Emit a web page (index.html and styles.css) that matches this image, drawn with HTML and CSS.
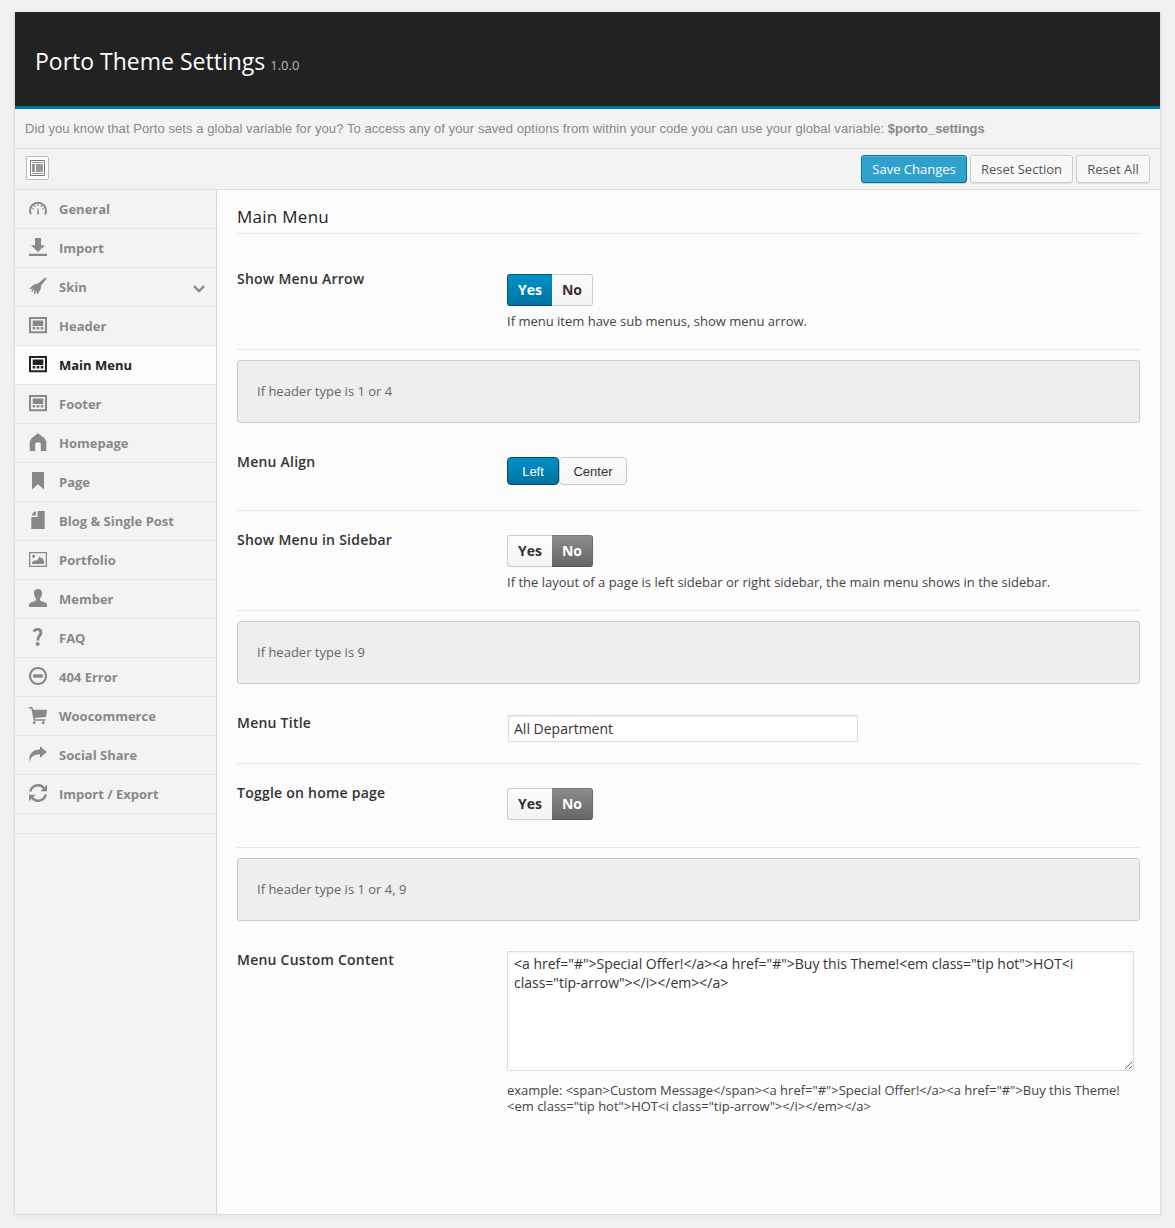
FILE: index.html
```html
<!DOCTYPE html>
<html lang="en">
<head>
<meta charset="utf-8">
<title>Porto Theme Settings</title>
<link rel="stylesheet" href="styles.css">
</head>
<body>
<svg class="sprite" aria-hidden="true">
  <symbol id="website" viewBox="0 0 18 18"><path fill-rule="evenodd" d="M0 1h18v16.300H0zM2 3v12.300h14V3zM3.700 4.500h10.600v5.500H3.700zM3.700 11h2.600v2.400H3.700zM7.700 11h2.600v2.400H7.700zM11.700 11h2.600v2.400h-2.600z"/></symbol>
</svg>
<div class="panel">
  <header class="header">
    <h1 class="brand">Porto Theme Settings</h1>
    <span class="version">1.0.0</span>
  </header>
  <div class="intro">Did you know that Porto sets a global variable for you? To access any of your saved options from within your code you can use your global variable: <strong>$porto_settings</strong></div>
  <div class="toolbar">
    <button class="expand" aria-label="Expand options">
      <svg width="15" height="16" viewBox="0 0 15 16"><path fill="#fff" stroke="#777" d="M.5.500h14v15H.5z"/><path fill="#999" d="M2 2h11v1H2zM2 4h3v8H2zM6 4h7v8H6zM2 13h11v1H2z"/></svg>
    </button>
    <div class="actions">
      <button class="btn btn-primary">Save Changes</button>
      <button class="btn btn-section">Reset Section</button>
      <button class="btn btn-all">Reset All</button>
    </div>
  </div>
  <div class="body">
    <nav class="sidebar">
      <a class="item"><svg class="icon" viewBox="0 0 18 18"><path fill="none" stroke="currentColor" stroke-width="2" d="M2 15.200A8 8 0 0 1 1 11.500a8 7.700 0 0 1 16 0 8 8 0 0 1-1 3.700"/><path d="M8.500 9.500h1l.5 5.700H8zM8.300 5.500h1.400V7H8.300zM5 6.300h1.400v1.400H5zM11.600 6.300H13v1.400h-1.400zM3.500 9h1.300v1.400H3.500zM13.200 9h1.300v1.400h-1.300z"/></svg>General</a>
      <a class="item"><svg class="icon" viewBox="0 0 18 18"><path d="M6 0h6v7.200h4L9 14 2 7.200h4zM0 15.800h18V18H0z"/></svg>Import</a>
      <a class="item"><svg class="icon" viewBox="0 0 18 18"><path d="M16.300.400 17.700 1.600 12 8.800C12.500 11.500 10.500 15 8 17.500L7.300 13.500 6 17.300 4.700 16 6 12.500 3 15 2.200 13.500 4.500 11.500 0 12.300C2.500 9 5.500 6.500 9.200 6.500z"/></svg>Skin<svg class="chevron" viewBox="0 0 12 8"><path fill="none" stroke="currentColor" stroke-width="2.400" d="M1 1.200 6 6l5-4.800"/></svg></a>
      <a class="item"><svg class="icon"><use href="#website"/></svg>Header</a>
      <a class="item active"><svg class="icon"><use href="#website"/></svg>Main Menu</a>
      <a class="item"><svg class="icon"><use href="#website"/></svg>Footer</a>
      <a class="item"><svg class="icon" viewBox="0 0 18 18"><path d="M9 .3l6.500 5 1.800 3.200V18h-5.500v-7Q11.800 9.300 9 9.300T6.200 11v7H.7V8.500l1.800-3.200z"/></svg>Homepage</a>
      <a class="item"><svg class="icon" viewBox="0 0 18 18"><path d="M3 0h12v17.500l-6-5.200-6 5.200z"/></svg>Page</a>
      <a class="item"><svg class="icon" viewBox="0 0 18 18"><path d="M8.500 0h7.200v18H2.300V6h6.200zM6.900.300v4.200H2.700C3.300 2.300 4.700.9 6.900.3z"/></svg>Blog &amp; Single Post</a>
      <a class="item"><svg class="icon" viewBox="0 0 18 18"><path fill-rule="evenodd" d="M0 2h18v15H0zM1.300 3.300v12.400h15.400V3.300zM3 14v-1.500L6 10l1.700 1 3-4.700 1.500 2 1-.5L15 11v3z"/><circle cx="4.500" cy="6.300" r="1.500"/></svg>Portfolio</a>
      <a class="item"><svg class="icon" viewBox="0 0 18 18"><path d="M9 0c2.800 0 4.200 1.700 4 4.500-.1 2.300-1 4-2 5-.5 1.300.3 2.300 1.600 2.700l3.700 1.300Q18 14.200 18 16v2H0v-2q0-1.800 1.700-2.500l3.700-1.300C6.700 11.800 7.500 10.800 7 9.500c-1-1-1.900-2.700-2-5C4.800 1.700 6.200 0 9 0z"/></svg>Member</a>
      <a class="item"><svg class="icon" viewBox="0 0 18 18"><path fill="none" stroke="currentColor" stroke-width="2.900" d="M4.800 3.700Q5.800 1.400 8.500 1.400c2.300 0 3.400 1.300 3.400 3 0 3.300-3.200 3.500-3.200 8"/><circle cx="8.700" cy="16" r="2"/></svg>FAQ</a>
      <a class="item"><svg class="icon" viewBox="0 0 18 18"><circle cx="9" cy="9" r="8" fill="none" stroke="currentColor" stroke-width="2.100"/><path d="M4.200 7.300h9.600v3.400H4.200z"/></svg>404 Error</a>
      <a class="item"><svg class="icon" viewBox="0 0 18 18"><path d="M0 1h3.200l1 2.700H18l-1 7.200-11.300 1.200.3 1.200h10.500v1.400H4.800L2.300 2.600H0z"/><circle cx="5.300" cy="16.700" r="1.400"/><circle cx="14.200" cy="16.700" r="1.400"/></svg>Woocommerce</a>
      <a class="item"><svg class="icon" viewBox="0 0 18 18"><path d="M11 1.300 17.800 7 11 12.800V9.600C5.500 9 2 11.500.4 16.700-.8 9.500 4 4.500 11 4.600z"/></svg>Social Share</a>
      <a class="item"><svg class="icon" viewBox="0 0 18 18"><path fill="none" stroke="currentColor" stroke-width="2.400" d="M1.300 7.500A7.800 7.800 0 0 1 15 4.200M16.700 10.500A7.800 7.800 0 0 1 3 13.800"/><path d="M18 .8v6.400h-6.600zM0 17.200v-6.400h6.600z"/></svg>Import / Export</a>
      <div class="divider"></div>
    </nav>
    <main class="content">
      <h2 class="title">Main Menu</h2>
      <section class="row row-arrow">
        <h3 class="label">Show Menu Arrow</h3>
        <div class="field">
          <div class="switch"><span class="yes on">Yes</span><span class="no">No</span></div>
          <p class="desc">If menu item have sub menus, show menu arrow.</p>
        </div>
      </section>
      <div class="info">If header type is 1 or 4</div>
      <section class="row row-align">
        <h3 class="label">Menu Align</h3>
        <div class="field choices"><span class="choice chosen">Left</span><span class="choice center">Center</span></div>
      </section>
      <section class="row row-sidebar">
        <h3 class="label">Show Menu in Sidebar</h3>
        <div class="field">
          <div class="switch"><span class="yes">Yes</span><span class="no off">No</span></div>
          <p class="desc">If the layout of a page is left sidebar or right sidebar, the main menu shows in the sidebar.</p>
        </div>
      </section>
      <div class="info">If header type is 9</div>
      <section class="row row-title">
        <h3 class="label">Menu Title</h3>
        <div class="field"><input class="text" type="text" value="All Department"></div>
      </section>
      <section class="row row-toggle">
        <h3 class="label">Toggle on home page</h3>
        <div class="field">
          <div class="switch"><span class="yes">Yes</span><span class="no off">No</span></div>
        </div>
      </section>
      <div class="info">If header type is 1 or 4, 9</div>
      <section class="row row-custom">
        <h3 class="label">Menu Custom Content</h3>
        <div class="field">
          <textarea class="area" spellcheck="false">&lt;a href="#"&gt;Special Offer!&lt;/a&gt;&lt;a href="#"&gt;Buy this Theme!&lt;em class="tip hot"&gt;HOT&lt;i class="tip-arrow"&gt;&lt;/i&gt;&lt;/em&gt;&lt;/a&gt;</textarea>
          <p class="desc">example: &lt;span&gt;Custom Message&lt;/span&gt;&lt;a href="#"&gt;Special Offer!&lt;/a&gt;&lt;a href="#"&gt;Buy this Theme!<br>&lt;em class="tip hot"&gt;HOT&lt;i class="tip-arrow"&gt;&lt;/i&gt;&lt;/em&gt;&lt;/a&gt;</p>
        </div>
      </section>
    </main>
  </div>
</div>
</body>
</html>
```
FILE: styles.css
```css
* { box-sizing: border-box; }
body {
  margin: 0;
  padding: 12px 14px 13px;
  background: #f1f1f1;
  color: #444;
  font: 13px/18px "Open Sans", sans-serif;
}
h1, h2, h3, p { margin: 0; }
button { font-family: inherit; }
.sprite { display: none; }

.panel {
  display: flex;
  flex-direction: column;
  height: 1203px;
  border: 1px solid #dedede;
  border-top: 0;
  background: #f3f3f3;
  box-shadow: 0 1px 5px rgba(0, 0, 0, .06);
}

.header {
  display: flex;
  align-items: baseline;
  gap: 5px;
  height: 97px;
  padding: 32px 20px 0;
  border-bottom: 3px solid #0074a2;
  background: #222;
}
.brand { color: #fff; font-size: 23px; font-weight: 400; line-height: 34px; }
.version { color: #bbb; font-size: 13px; }

.intro {
  height: 40px;
  padding: 11px 10px 9px;
  border-bottom: 1px solid #dedede;
  color: #888;
  font-family: "Liberation Sans", sans-serif;
  letter-spacing: .075px;
}
.intro strong { letter-spacing: -.05px; }

.toolbar {
  display: flex;
  justify-content: space-between;
  height: 41px;
  padding: 6px 10px 0 11px;
  border-bottom: 1px solid #dedede;
}
.expand {
  display: flex;
  align-items: center;
  justify-content: center;
  width: 23px;
  height: 24px;
  margin-top: 1px;
  padding: 0;
  border: 1px solid #bbb;
  border-radius: 2px;
  background: #fff;
}
.actions { display: flex; gap: 3px; }
.btn {
  height: 28px;
  padding: 0;
  border: 1px solid #ccc;
  border-radius: 3px;
  background: #f7f7f7;
  box-shadow: inset 0 1px 0 #fff, 0 1px 0 rgba(0, 0, 0, .08);
  color: #555;
  font-size: 13px;
}
.btn-primary {
  width: 106px;
  border-color: #0074a2;
  background: #2ea2cc;
  box-shadow: inset 0 1px 0 rgba(120, 200, 230, .5), 0 1px 0 rgba(0, 0, 0, .15);
  color: #fff;
}
.btn-section { width: 103px; }
.btn-all { width: 74px; }

.body { display: flex; flex: 1; }
.sidebar { width: 202px; border-right: 1px solid #d8d8d8; }
.item {
  display: flex;
  align-items: center;
  height: 39px;
  padding: 0 11px 0 14px;
  border-bottom: 1px solid #e7e7e7;
  color: #888;
  font-weight: 700;
}
.active { background: #fcfcfc; color: #222; }
.icon { width: 18px; height: 18px; margin: -2px 12px 0 0; fill: currentColor; }
.chevron { width: 12px; height: 8px; margin: 3px 0 0 auto; }
.divider { height: 20px; border-bottom: 1px solid #e7e7e7; }

.content { flex: 1; padding: 0 20px; background: #fcfcfc; }
.title {
  height: 44px;
  padding-top: 18px;
  border-bottom: 1px solid #e7e7e7;
  color: #222;
  font-size: 17px;
  font-weight: 400;
  letter-spacing: .28px;
}
.row { display: flex; border-bottom: 1px solid #e7e7e7; }
.label {
  width: 270px;
  color: #333;
  font-size: 14px;
  font-weight: 600;
  letter-spacing: .24px;
  line-height: 18px;
}
.field { flex: 1; }
.row-arrow { height: 116px; padding-top: 36px; }
.row-arrow .field { padding-top: 4px; }
.row-align { height: 88px; padding-top: 30px; }
.row-align .field { padding-top: 4px; }
.row-sidebar { height: 100px; padding-top: 20px; }
.row-sidebar .field { padding-top: 4px; }
.row-title { height: 80px; padding-top: 30px; }
.row-title .field { padding: 1px 0 0 1px; }
.row-toggle { height: 84px; padding-top: 20px; }
.row-toggle .field { padding-top: 4px; }
.row-custom { padding-top: 30px; border: 0; }

.switch { display: flex; height: 32px; }
.switch span {
  height: 32px;
  border: 1px solid #ccc;
  background: linear-gradient(#fcfcfc, #f3f3f3);
  color: #333;
  font-size: 14px;
  font-weight: 700;
  line-height: 30px;
  text-align: center;
}
.switch .yes { width: 45px; border-right: 0; border-radius: 3px 0 0 3px; }
.switch .no { width: 41px; border-left: 0; border-radius: 0 3px 3px 0; }
.switch .on { border-color: #005f87 #005f87 #004b6b; background: linear-gradient(#0090c8, #0074a2); color: #fff; }
.switch .off { border-color: #777 #666 #555; background: linear-gradient(#8c8c8c, #666); color: #fff; }
.desc { margin-top: 7px; line-height: 16px; }

.info {
  height: 63px;
  margin-top: 10px;
  padding: 21px 19px;
  border: 1px solid #ccc;
  border-radius: 3px;
  background: #eee;
  color: #666;
}

.choices { display: flex; }
.choice {
  width: 68px;
  height: 28px;
  border: 1px solid #ccc;
  border-radius: 4px;
  background: linear-gradient(#fbfbfb, #f4f4f4);
  color: #333;
  font: 13px/28px "Liberation Sans", sans-serif;
  text-align: center;
}
.chosen { width: 52px; border-color: #004b6b; background: linear-gradient(#0090c8, #0074a2); color: #fff; }

.text, .area {
  display: block;
  border: 1px solid #ddd;
  border-radius: 0;
  outline: 0;
  background: #fff;
  box-shadow: inset 0 1px 2px rgba(0, 0, 0, .07);
  color: #333;
  font: 14px/19px "Open Sans", sans-serif;
}
.text { width: 350px; height: 27px; padding: 3px 5px; }
.area { width: 627px; height: 120px; padding: 2px 6px; }
.row-custom .desc { margin-top: 11px; }
```
